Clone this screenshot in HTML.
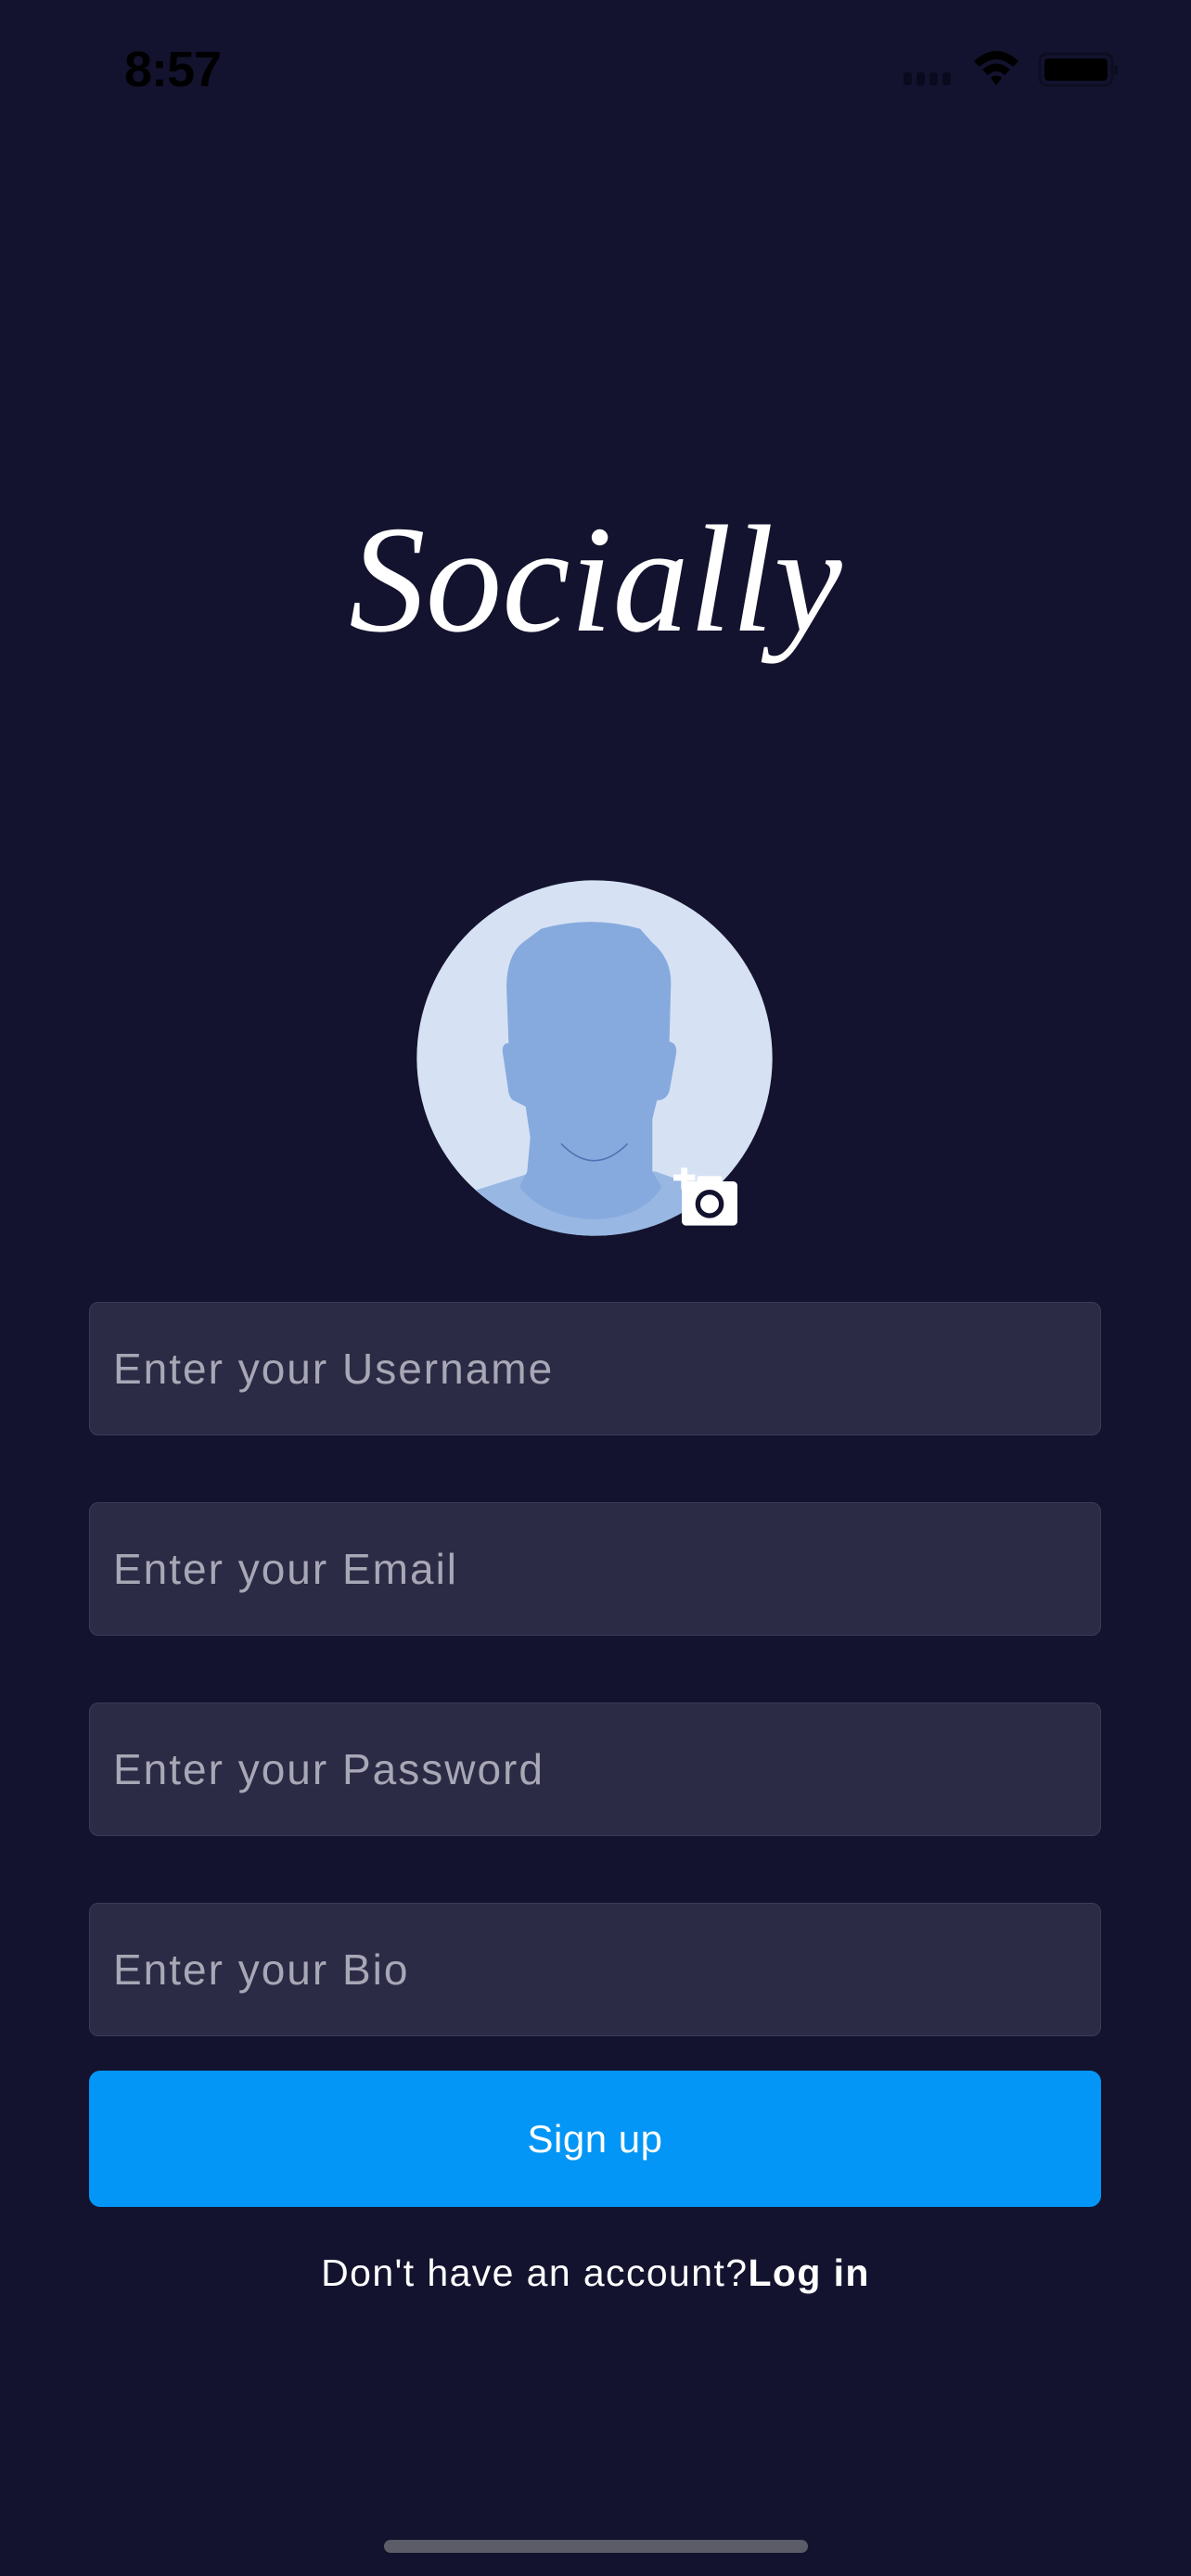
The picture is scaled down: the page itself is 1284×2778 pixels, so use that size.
<!DOCTYPE html>
<html><head><meta charset="utf-8"><style>
*{margin:0;padding:0;box-sizing:border-box}
body{width:1284px;height:2778px;background:#13132f;position:relative;overflow:hidden;font-family:"Liberation Sans",sans-serif}
.abs{position:absolute}
.time{left:134px;top:44px;font-size:54px;font-weight:bold;color:#000;letter-spacing:-1px}
.logo{left:0;width:1284px;top:505px;text-align:center;font-family:"Liberation Serif",serif;font-style:italic;font-size:165px;color:#fff;line-height:240px;font-weight:normal}
.inp{left:96px;width:1091px;height:144px;background:#2c2b45;border:1.5px solid #3b3a58;border-radius:10px;display:flex;align-items:center;padding-left:25px;font-size:46px;color:#a8a7b6;letter-spacing:2px}
.btn{left:96px;top:2233px;width:1091px;height:147px;background:#0396f6;border-radius:12px;color:#fff;font-size:42px;display:flex;align-items:center;justify-content:center;letter-spacing:0.5px}
.foot{left:0;width:1284px;top:2428px;text-align:center;color:#fff;font-size:41px;letter-spacing:1.4px}
.home{left:414px;top:2739px;width:457px;height:14px;border-radius:7px;background:#5c5c68}
</style></head><body>
<div class="abs time">8:57</div>
<svg class="abs" style="left:960px;top:50px" width="250" height="50" viewBox="0 0 250 50">
<g fill="#0a0a1e"><rect x="14" y="28" width="9" height="14" rx="3"/><rect x="28" y="28" width="9" height="14" rx="3"/><rect x="42" y="28" width="9" height="14" rx="3"/><rect x="56" y="28" width="9" height="14" rx="3"/></g>
<path d="M90 16 Q114 -6 138 16 L132 22 Q114 6 96 22Z M99 25 Q114 12 129 25 L123 31 Q114 23 105 31Z M108 34 Q114 29 120 34 L114 42Z" fill="#000"/>
<rect x="161" y="8" width="78" height="34" rx="8" fill="none" stroke="#0d0d22" stroke-width="3"/>
<rect x="166" y="13" width="68" height="24" rx="4" fill="#000"/>
<rect x="241" y="20" width="4" height="11" rx="2" fill="#0d0d22"/>
</svg>
<div class="abs logo">Socially</div>
<svg class="abs" style="left:420px;top:920px" width="440" height="420" viewBox="0 0 1320 1260">
<defs><clipPath id="c"><circle cx="663" cy="663" r="575"/></clipPath></defs>
<circle cx="663" cy="663" r="575" fill="#d6e2f4"/>
<g clip-path="url(#c)">
<path d="M280 1090 L440 1040 L860 1030 L1000 1080 L1100 1300 L200 1300Z" fill="#98b7e3"/>
<path d="M490 245 Q650 200 810 245 L850 290 Q910 340 910 420 L905 610 Q935 615 925 660 L905 770 Q895 800 865 800 L850 860 L850 1030 L880 1080 Q820 1180 660 1185 Q500 1180 420 1080 L445 1030 L455 920 L440 820 L400 800 Q385 790 383 760 L365 640 Q365 615 385 615 L378 430 Q380 330 430 290Z" fill="#87aade"/>
<path d="M555 940 Q660 1050 770 940" fill="none" stroke="#4d74b4" stroke-width="5"/>
</g>
<rect x="945" y="1062" width="180" height="143" rx="14" fill="#fff"/>
<rect x="995" y="1045" width="80" height="30" rx="6" fill="#fff"/>
<circle cx="1035" cy="1135" r="38" fill="none" stroke="#13132f" stroke-width="16"/>
<rect x="918" y="1040" width="70" height="20" fill="#fff"/><rect x="943" y="1018" width="20" height="70" fill="#fff"/>
</svg>
<div class="abs inp" style="top:1404px">Enter your Username</div>
<div class="abs inp" style="top:1620px">Enter your Email</div>
<div class="abs inp" style="top:1836px">Enter your Password</div>
<div class="abs inp" style="top:2052px">Enter your Bio</div>
<div class="abs btn">Sign up</div>
<div class="abs foot">Don't have an account?<b>Log in</b></div>
<div class="abs home"></div>
</body></html>
